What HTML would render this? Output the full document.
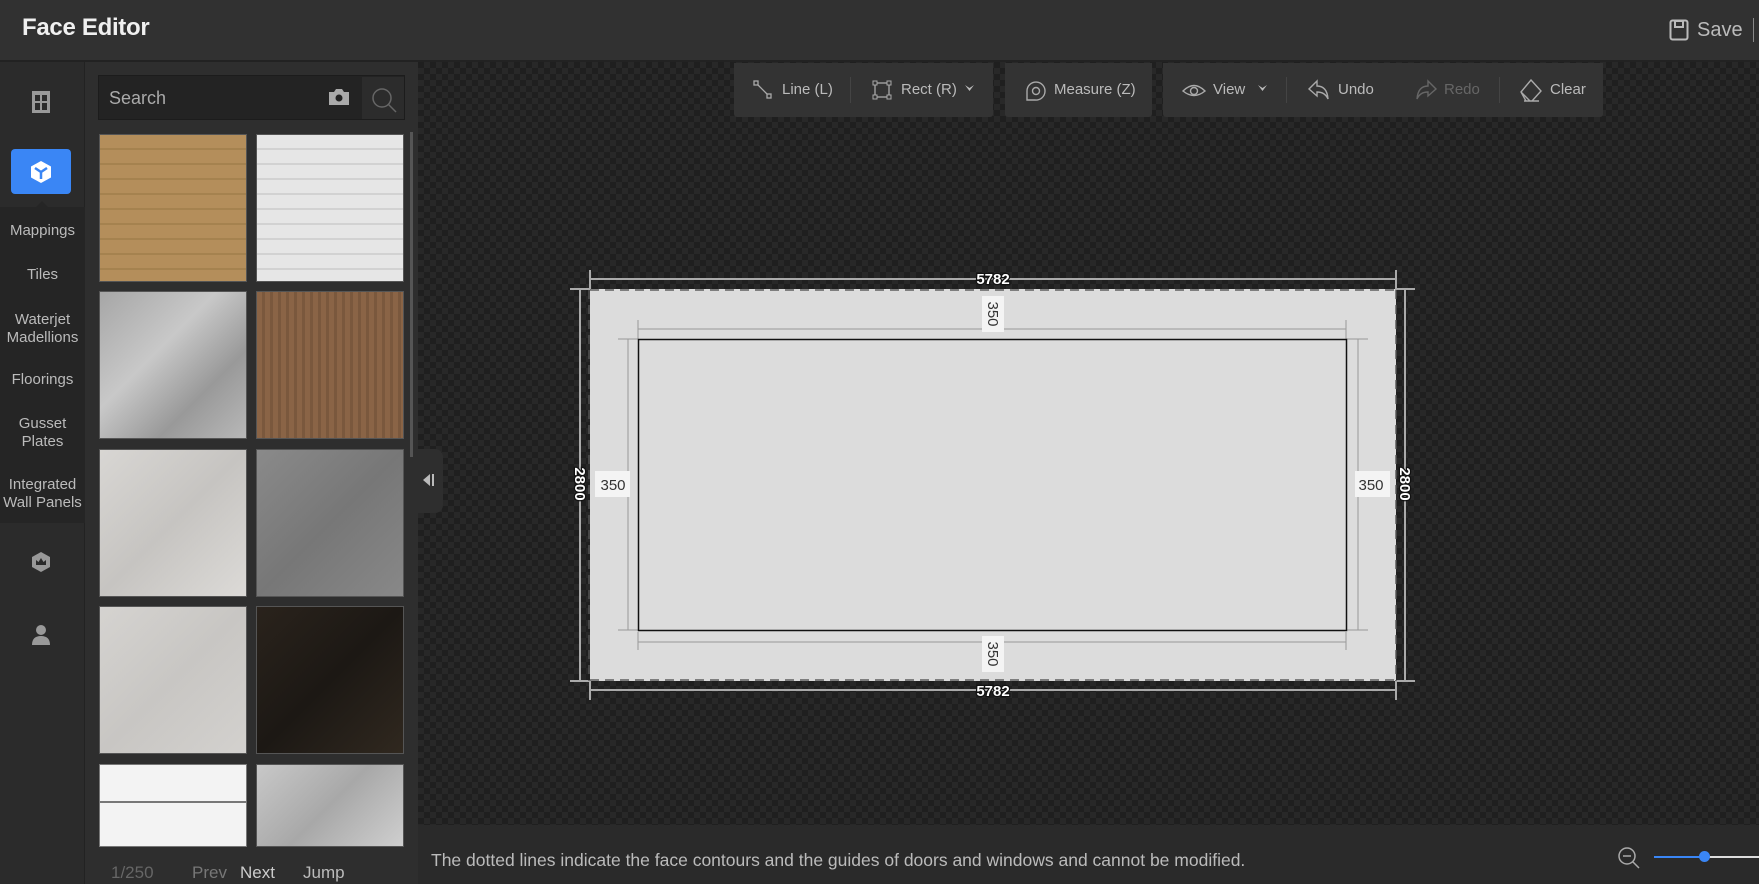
<!DOCTYPE html>
<html><head><meta charset="utf-8"><style>
*{margin:0;padding:0;box-sizing:border-box}
body{width:1759px;height:884px;overflow:hidden;background:#2e2e2e;font-family:"Liberation Sans",sans-serif;position:relative;color:#ccc}
.a{position:absolute}
#hdr{left:0;top:0;width:1759px;height:62px;background:#313131;border-bottom:2px solid #222}
#nav{left:0;top:62px;width:85px;height:822px;background:#2b2b2b;border-right:1px solid #222}
#panel{left:86px;top:62px;width:332px;height:822px;background:#2e2e2e}
#canvas{left:418px;top:62px;width:1341px;height:763px;background-color:#1f1f1f;background-image:linear-gradient(45deg,#282828 25%,transparent 25%,transparent 75%,#282828 75%),linear-gradient(45deg,#282828 25%,transparent 25%,transparent 75%,#282828 75%);background-size:12px 12px;background-position:0 0,6px 6px}
#bot{left:418px;top:825px;width:1341px;height:59px;background:#2a2a2a}
.lbl{width:85px;text-align:center;font-size:15px;color:#bbb;line-height:18px}
.tile{width:148px;border:1px solid #555}
.tb{background:#333;top:63px;height:54px;border-radius:0 0 3px 3px}
.ti{font-size:15px;color:#bbb;top:81px}
</style></head><body>
<div id="hdr" class="a"></div>
<div class="a" style="left:22px;top:14px;font-size:24px;font-weight:bold;color:#f0f0f0;letter-spacing:-0.3px">Face Editor</div>
<svg class="a" style="left:1669px;top:19px" width="20" height="22" viewBox="0 0 20 22"><rect x="1.5" y="1.5" width="17" height="19" rx="2" fill="none" stroke="#bbb" stroke-width="2"/><rect x="6" y="2" width="8" height="6" fill="none" stroke="#bbb" stroke-width="2"/></svg>
<div class="a" style="left:1697px;top:19px;font-size:20px;color:#bbb">Save</div>
<div class="a" style="left:1753px;top:18px;width:1px;height:24px;background:#888"></div>

<div id="nav" class="a"></div>
<div class="a" style="left:0;top:207px;width:85px;height:316px;background:#252525"></div>
<svg class="a" style="left:31px;top:90px" width="20" height="24" viewBox="0 0 20 24"><rect x="1" y="1" width="18" height="22" fill="#999"/><rect x="4" y="5" width="5" height="6" fill="#2b2b2b"/><rect x="11" y="5" width="5" height="6" fill="#2b2b2b"/><rect x="4" y="13" width="5" height="7" fill="#2b2b2b"/><rect x="11" y="13" width="5" height="7" fill="#2b2b2b"/></svg>
<div class="a" style="left:11px;top:149px;width:60px;height:45px;background:#3a86f5;border-radius:4px"></div>
<svg class="a" style="left:30px;top:160px" width="22" height="24" viewBox="0 0 22 24"><path d="M11 1 L21 6.5 V17.5 L11 23 L1 17.5 V6.5Z" fill="#fff"/><path d="M5 8 L11 12 L17 8 M11 12 V19" stroke="#3a86f5" stroke-width="2.5" fill="none"/></svg>
<div class="a" style="left:36px;top:201px;border:6px solid transparent;border-bottom-color:#252525;border-top:0"></div>
<div class="a lbl" style="top:222px">Mappings</div>
<div class="a lbl" style="top:266px">Tiles</div>
<div class="a lbl" style="top:311px">Waterjet<br>Madellions</div>
<div class="a lbl" style="top:371px">Floorings</div>
<div class="a lbl" style="top:415px">Gusset<br>Plates</div>
<div class="a lbl" style="top:476px">Integrated<br>Wall Panels</div>
<svg class="a" style="left:30px;top:551px" width="22" height="22" viewBox="0 0 22 22"><path d="M11 1 L20 6 V16 L11 21 L2 16 V6Z" fill="#999"/><path d="M6 9 L8.5 11 L11 7 L13.5 11 L16 9 V14 H6Z" fill="#2b2b2b"/></svg>
<svg class="a" style="left:31px;top:624px" width="20" height="22" viewBox="0 0 20 22"><circle cx="10" cy="6" r="5" fill="#999"/><path d="M1 21 Q1 12 10 12 Q19 12 19 21Z" fill="#999"/></svg>

<div id="panel" class="a"></div>
<div class="a" style="left:98px;top:75px;width:307px;height:45px;background:#232323;border:1px solid #1c1c1c"></div>
<div class="a" style="left:109px;top:88px;font-size:18px;color:#aaa">Search</div>
<svg class="a" style="left:328px;top:88px" width="22" height="18" viewBox="0 0 22 18"><path d="M1 4 H6 L8 1 H14 L16 4 H21 V17 H1Z" fill="#aaa"/><circle cx="11" cy="10" r="3.5" fill="#232323"/></svg>
<div class="a" style="left:362px;top:77px;width:42px;height:42px;background:#2c2c2c"></div>
<svg class="a" style="left:370px;top:86px" width="28" height="28" viewBox="0 0 28 28"><circle cx="12" cy="12" r="9" fill="none" stroke="#666" stroke-width="1.5"/><path d="M18.5 18.5 L26 26" stroke="#666" stroke-width="1.5"/></svg>
<div class="a" style="left:410px;top:132px;width:3px;height:325px;background:#555"></div>

<div class="a tile" style="left:99px;top:134px;height:148px;background:repeating-linear-gradient(180deg,#b48e5b 0 13px,#a5824f 13px 15px),#b48e5b"></div>
<div class="a tile" style="left:256px;top:134px;height:148px;background:repeating-linear-gradient(180deg,#e6e6e6 0 13px,#d2d2d2 13px 15px)"></div>
<div class="a tile" style="left:99px;top:291px;height:148px;background:linear-gradient(135deg,#a6a6a6,#c8c8c8 40%,#999 70%,#b8b8b8)"></div>
<div class="a tile" style="left:256px;top:291px;height:148px;background:repeating-linear-gradient(90deg,#8a6446 0 5px,#7a583d 5px 8px)"></div>
<div class="a tile" style="left:99px;top:449px;height:148px;background:linear-gradient(135deg,#d8d6d3,#c6c4c1 50%,#dcdad7)"></div>
<div class="a tile" style="left:256px;top:449px;height:148px;background:linear-gradient(135deg,#8a8a8a,#777 50%,#888)"></div>
<div class="a tile" style="left:99px;top:606px;height:148px;background:linear-gradient(135deg,#d5d3d0,#c8c6c3 50%,#d3d1ce)"></div>
<div class="a tile" style="left:256px;top:606px;height:148px;background:linear-gradient(135deg,#2a231c,#1c1814 50%,#30281f)"></div>
<div class="a tile" style="left:99px;top:764px;height:83px;background:#f3f3f3;border-color:#777"><div style="margin-top:36px;height:2px;background:#777"></div></div>
<div class="a tile" style="left:256px;top:764px;height:83px;background:linear-gradient(135deg,#c8c8c8,#a8a8a8 50%,#cfcfcf)"></div>
<div class="a" style="left:111px;top:863px;font-size:17px;color:#666">1/250</div>
<div class="a" style="left:192px;top:863px;font-size:17px;color:#777">Prev</div>
<div class="a" style="left:240px;top:863px;font-size:17px;color:#ccc">Next</div>
<div class="a" style="left:303px;top:863px;font-size:17px;color:#bbb">Jump</div>

<div id="canvas" class="a"></div>
<div class="a" style="left:418px;top:449px;width:25px;height:64px;background:#2e2e2e;border-radius:0 8px 8px 0"></div>
<svg class="a" style="left:421px;top:473px" width="14" height="14" viewBox="0 0 14 14"><path d="M9 1 L2 7 L9 13Z" fill="#bbb"/><rect x="11" y="1" width="2" height="12" fill="#bbb"/></svg>

<div class="a tb" style="left:734px;width:259px"></div>
<div class="a tb" style="left:1005px;width:147px"></div>
<div class="a tb" style="left:1163px;width:440px"></div>
<svg class="a" style="left:753px;top:80px" width="20" height="20" viewBox="0 0 20 20"><rect x="1" y="1" width="4" height="4" fill="none" stroke="#aaa" stroke-width="1.3"/><rect x="14" y="14" width="4" height="4" fill="none" stroke="#aaa" stroke-width="1.3"/><path d="M4.5 4.5 L14.5 14.5" stroke="#aaa" stroke-width="1.3"/></svg>
<div class="a ti" style="left:782px">Line (L)</div>
<div class="a" style="left:850px;top:77px;width:1px;height:26px;background:#444"></div>
<svg class="a" style="left:872px;top:80px" width="20" height="20" viewBox="0 0 20 20"><rect x="3" y="3" width="14" height="14" fill="none" stroke="#aaa" stroke-width="1.3"/><rect x="1" y="1" width="4" height="4" fill="#333" stroke="#aaa"/><rect x="15" y="1" width="4" height="4" fill="#333" stroke="#aaa"/><rect x="1" y="15" width="4" height="4" fill="#333" stroke="#aaa"/><rect x="15" y="15" width="4" height="4" fill="#333" stroke="#aaa"/></svg>
<div class="a ti" style="left:901px">Rect (R)</div>
<svg class="a" style="left:964px;top:84px" width="11" height="9" viewBox="0 0 11 9"><path d="M1 1 L5.5 7 L10 1 L5.5 4Z" fill="#bbb"/></svg>
<svg class="a" style="left:1024px;top:79px" width="22" height="24" viewBox="0 0 22 24"><path d="M3 21 H11 A9 9 0 1 0 3 12Z" fill="none" stroke="#aaa" stroke-width="1.4"/><circle cx="12" cy="12" r="3.5" fill="none" stroke="#aaa" stroke-width="1.4"/></svg>
<div class="a ti" style="left:1054px">Measure (Z)</div>
<svg class="a" style="left:1182px;top:80px" width="24" height="20" viewBox="0 0 24 20"><path d="M1 11 Q12 0 23 11 Q12 20 1 11Z" fill="none" stroke="#aaa" stroke-width="1.4"/><circle cx="12" cy="11" r="3.5" fill="none" stroke="#aaa" stroke-width="1.4"/></svg>
<div class="a ti" style="left:1213px">View</div>
<svg class="a" style="left:1257px;top:84px" width="11" height="9" viewBox="0 0 11 9"><path d="M1 1 L5.5 7 L10 1 L5.5 4Z" fill="#bbb"/></svg>
<div class="a" style="left:1286px;top:77px;width:1px;height:26px;background:#444"></div>
<svg class="a" style="left:1307px;top:79px" width="24" height="22" viewBox="0 0 24 22"><path d="M10 2 L2 10 L10 17 V13 Q18 13 21 20 Q20 7 10 7Z" fill="none" stroke="#aaa" stroke-width="1.4"/></svg>
<div class="a ti" style="left:1338px">Undo</div>
<svg class="a" style="left:1414px;top:79px" width="24" height="22" viewBox="0 0 24 22"><path d="M14 2 L22 10 L14 17 V13 Q6 13 3 20 Q4 7 14 7Z" fill="none" stroke="#666" stroke-width="1.4"/></svg>
<div class="a ti" style="left:1444px;color:#666">Redo</div>
<div class="a" style="left:1499px;top:77px;width:1px;height:26px;background:#444"></div>
<svg class="a" style="left:1519px;top:79px" width="24" height="24" viewBox="0 0 24 24"><path d="M12 1 L22 12 L13 22 H7 L2 13Z M2 13 L11 22 M5 22 H20" fill="none" stroke="#aaa" stroke-width="1.4"/></svg>
<div class="a ti" style="left:1550px">Clear</div>

<svg class="a" style="left:0;top:0" width="1759" height="884" viewBox="0 0 1759 884">
<rect x="590" y="289" width="806" height="392" fill="#dcdcdc"/>
<g stroke="#aaa" stroke-width="2" fill="none">
<path d="M590 279 H1396 M590 270 V290 M1396 270 V290"/>
<path d="M590 690 H1396 M590 680 V700 M1396 680 V700"/>
<path d="M580 289 V681 M570 289 H590 M570 681 H590"/>
<path d="M1405 289 V681 M1396 289 H1415 M1396 681 H1415"/>
</g>
<g stroke="#555" stroke-width="2" stroke-dasharray="9 6" fill="none" opacity=".7">
<path d="M590 290 H1396 M590 680 H1396 M589 290 V681 M1396 290 V681"/>
</g>
<g stroke="#999" stroke-width="1" fill="none">
<path d="M638 329 H1346 M638 320 V339 M1346 320 V339"/>
<path d="M638 642 H1346 M638 632 V650 M1346 632 V650"/>
<path d="M628 339 V630 M618 339 H638 M618 630 H638"/>
<path d="M1358 339 V630 M1346 339 H1368 M1346 630 H1368"/>
</g>
<rect x="638.5" y="339.5" width="708" height="291" fill="none" stroke="#111" stroke-width="1.5"/>
<g font-family="Liberation Sans" font-size="15" font-weight="bold" fill="#fff" stroke="#111" stroke-width="2.5" paint-order="stroke" text-anchor="middle">
<text x="993" y="284">5782</text><text x="993" y="696">5782</text>
<text transform="translate(575,484) rotate(90)">2800</text>
<text transform="translate(1400,484) rotate(90)">2800</text>
</g>
<rect x="595" y="471" width="35" height="26" fill="#f4f4f4"/><rect x="1355" y="471" width="35" height="26" fill="#f4f4f4"/>
<rect x="982" y="296" width="22" height="36" fill="#f4f4f4"/><rect x="982" y="636" width="22" height="36" fill="#f4f4f4"/>
<g font-family="Liberation Sans" font-size="15" fill="#333" text-anchor="middle">
<text x="613" y="490">350</text><text x="1371" y="490">350</text>
<text transform="translate(988,314) rotate(90)">350</text>
<text transform="translate(988,654) rotate(90)">350</text>
</g>
</svg>

<div id="bot" class="a"></div>
<div class="a" style="left:431px;top:850px;font-size:17.5px;color:#bbb">The dotted lines indicate the face contours and the guides of doors and windows and cannot be modified.</div>
<svg class="a" style="left:1617px;top:846px" width="24" height="24" viewBox="0 0 24 24"><circle cx="10" cy="10" r="8" fill="none" stroke="#aaa" stroke-width="1.5"/><path d="M6 10 H14 M16 16 L22 22" stroke="#aaa" stroke-width="1.5"/></svg>
<div class="a" style="left:1654px;top:856px;width:51px;height:2px;background:#3a86f5"></div>
<div class="a" style="left:1705px;top:856px;width:54px;height:2px;background:#ddd"></div>
<div class="a" style="left:1699px;top:851px;width:11px;height:11px;border-radius:50%;background:#3a86f5"></div>
</body></html>
